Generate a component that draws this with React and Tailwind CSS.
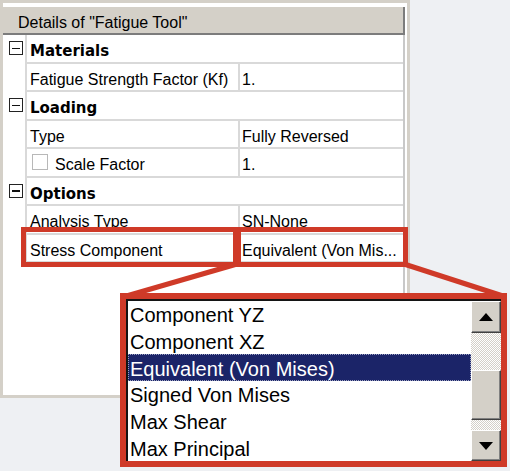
import React from "react";

const RED = "#cf3a28";

function ExpandBox() {
  return (
    <div className="w-[14px] h-[14px] border border-[#222] bg-white flex items-center justify-center">
      <div className="w-[8px] h-[1.5px] bg-[#111]" />
    </div>
  );
}

function SectionRow({ label }) {
  return (
    <div className="flex h-[28.5px]">
      <div className="w-[24px] flex items-center justify-center pl-[3px] pb-[2px] border-r-2 border-[#d9d9d9]">
        <ExpandBox />
      </div>
      <div className="flex-1 flex items-center pl-[3px] pt-[6px] border-b-2 border-[#d9d9d9] font-['DejaVu_Sans'] font-bold text-[15px] text-black">
        {label}
      </div>
    </div>
  );
}

function PropRow({ name, value, checkbox }) {
  return (
    <div className="flex h-[28.5px]">
      <div className="w-[24px] border-r-2 border-[#d9d9d9]" />
      <div className="flex-1 flex border-b-2 border-[#d9d9d9] text-[16px] text-black">
        <div className="w-[213px] flex items-center pl-[3px] border-r-2 border-[#d9d9d9] whitespace-nowrap overflow-hidden">
          {checkbox && (
            <div className="w-[16px] h-[16px] border border-[#b8b8b8] bg-white ml-[2px] mr-[7px]" />
          )}
          <span className="pt-[6px]">{name}</span>
        </div>
        <div className="flex-1 flex items-center pl-[2px] pt-[6px] whitespace-nowrap overflow-hidden">
          {value}
        </div>
      </div>
    </div>
  );
}

function ScrollButton({ up, h }) {
  return (
    <div
      className={`${h} bg-[#d4d0c8] border border-t-white border-l-white border-b-[#404040] border-r-[#404040] shadow-[inset_-1px_-1px_0_#808080] flex items-center justify-center`}
    >
      <svg width="14" height="8" viewBox="0 0 14 8">
        {up ? <path d="M7 0 L14 8 L0 8 Z" fill="#000" /> : <path d="M0 0 L14 0 L7 8 Z" fill="#000" />}
      </svg>
    </div>
  );
}

export default function App() {
  const items = [
    "Component YZ",
    "Component XZ",
    "Equivalent (Von Mises)",
    "Signed Von Mises",
    "Max Shear",
    "Max Principal",
  ];
  return (
    <div className="w-[510px] h-[471px] bg-[#eef0f3] relative overflow-hidden font-['Liberation_Sans',Arial,sans-serif]">
      <div className="w-[410px] h-[398px] bg-[#d4d0c8] pl-[3px] pt-[3px] pb-[3px] pr-[3px] flex">
        <div className="w-[404px] h-full bg-white flex flex-col">
          <div className="mt-[4px] w-[402px] h-[28px] bg-[#d4d0c8] border-b-2 border-r-2 border-[#7c7c7c] flex items-center pl-[15px] pt-[5px] text-[16px] text-black">
            Details of "Fatigue Tool"
          </div>
          <div className="w-[402px] border-r-2 border-[#c8c8c8] flex flex-col flex-1">
            <SectionRow label="Materials" />
            <PropRow name="Fatigue Strength Factor (Kf)" value="1." />
            <SectionRow label="Loading" />
            <PropRow name="Type" value="Fully Reversed" />
            <PropRow name="Scale Factor" value="1." checkbox />
            <SectionRow label="Options" />
            <PropRow name="Analysis Type" value="SN-None" />
            <PropRow name="Stress Component" value="Equivalent (Von Mis..." />
          </div>
        </div>
      </div>

      {/* annotation boxes */}
      <div className="absolute left-[21px] top-[227px] w-[217px] h-[40px] border-[5px] border-[#cf3a28]" />
      <div className="absolute left-[236px] top-[227px] w-[172px] h-[40px] border-[5px] border-[#cf3a28]" />

      <svg className="absolute left-0 top-0" width="510" height="471" viewBox="0 0 510 471">
        <line x1="237" y1="264" x2="123" y2="297" stroke={RED} strokeWidth="5" />
        <line x1="404" y1="264" x2="506" y2="297" stroke={RED} strokeWidth="5" />
      </svg>

      {/* dropdown popup */}
      <div className="absolute left-[120px] top-[293px] w-[387px] h-[174px] border-[6px] border-[#cf3a28] bg-white">
        <div className="w-full h-full flex border-t-2 border-l-2 border-[#141414]">
          <div className="flex-1 flex flex-col overflow-hidden">
            {items.map((t, i) => (
              <div
                key={t}
                className={
                  i === 2
                    ? "h-[26.7px] shrink-0 flex items-center pl-[2px] pt-[2px] text-[20px] text-white bg-[#1b2468] outline outline-1 outline-dotted outline-[#9aa0c0] -outline-offset-1 whitespace-nowrap"
                    : "h-[26.7px] shrink-0 flex items-center pl-[2px] pt-[2px] text-[20px] text-black whitespace-nowrap"
                }
              >
                {t}
              </div>
            ))}
          </div>
          <div className="w-[30px] flex flex-col">
            <ScrollButton up h="h-[32px]" />
            <div className="h-[37px] bg-[repeating-conic-gradient(#d4d0c8_0_25%,#ffffff_0_50%)] bg-[length:2px_2px]" />
            <div className="h-[50px] bg-[#d4d0c8] border border-t-white border-l-white border-b-[#404040] border-r-[#404040] shadow-[inset_-1px_-1px_0_#808080]" />
            <div className="h-[10px] bg-[repeating-conic-gradient(#d4d0c8_0_25%,#ffffff_0_50%)] bg-[length:2px_2px]" />
            <ScrollButton h="flex-1" />
          </div>
        </div>
      </div>
    </div>
  );
}
